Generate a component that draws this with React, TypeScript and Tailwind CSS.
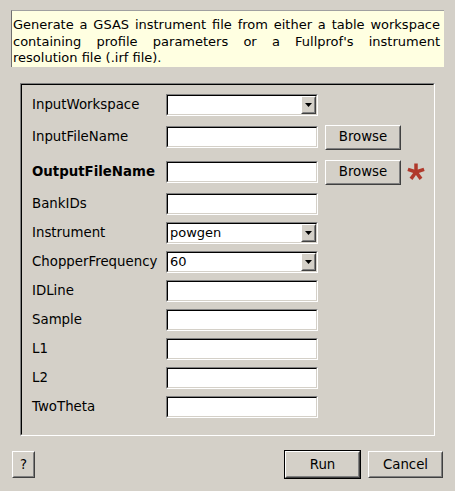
import React from "react";

const font = { fontFamily: '"DejaVu Sans", sans-serif' };

function Field({ children }: { children?: React.ReactNode }) {
  return (
    <div className="w-[152px] h-[22px] border border-t-[#808080] border-l-[#808080] border-b-white border-r-white">
      <div className="h-full border border-t-black border-l-black border-b-[#d4d0c8] border-r-[#d4d0c8] bg-white flex items-center">
        {children}
      </div>
    </div>
  );
}

function Combo({ value }: { value?: string }) {
  return (
    <Field>
      <span className="flex-1 pl-[2px] text-[13px] leading-none text-black">{value}</span>
      <div className="w-[15px] h-full border border-t-white border-l-white border-b-[#404040] border-r-[#404040] bg-[#d4d0c8]">
        <div className="h-full border border-t-[#d4d0c8] border-l-[#d4d0c8] border-b-[#808080] border-r-[#808080] flex items-center justify-center">
          <svg width="7" height="4" viewBox="0 0 7 4">
            <polygon points="0,0 7,0 3.5,4" fill="black" />
          </svg>
        </div>
      </div>
    </Field>
  );
}

function Button({
  children,
  w,
  h,
  def,
}: {
  children: React.ReactNode;
  w: string;
  h: string;
  def?: boolean;
}) {
  const inner = (
    <div className={`${w} ${h} border border-t-white border-l-white border-b-[#404040] border-r-[#404040] bg-[#d4d0c8]`}>
      <div className="h-full border border-t-[#d4d0c8] border-l-[#d4d0c8] border-b-[#808080] border-r-[#808080] flex items-center justify-center text-[13.33px] text-black">
        {children}
      </div>
    </div>
  );
  if (def) return <div className="border border-black">{inner}</div>;
  return inner;
}

function Star() {
  const arms = [-90, -18, 54, 126, 198];
  return (
    <svg width="18" height="18" viewBox="-9 -9 18 18" className="ml-[6px]">
      {arms.map((a) => {
        const r = (a * Math.PI) / 180;
        return (
          <line
            key={a}
            x1={0}
            y1={0}
            x2={Math.cos(r) * 8.5}
            y2={Math.sin(r) * 8.5}
            stroke="#b0392b"
            strokeWidth={3.5}
            strokeLinecap="butt"
          />
        );
      })}
    </svg>
  );
}

type Row = {
  label: string;
  bold?: boolean;
  h: string;
  kind: "combo" | "field";
  value?: string;
  browse?: boolean;
  star?: boolean;
};

const rows: Row[] = [
  { label: "InputWorkspace", h: "h-[30px]", kind: "combo" },
  { label: "InputFileName", h: "h-[34px]", kind: "field", browse: true },
  { label: "OutputFileName", bold: true, h: "h-[36px]", kind: "field", browse: true, star: true },
  { label: "BankIDs", h: "h-[28px]", kind: "field" },
  { label: "Instrument", h: "h-[29px]", kind: "combo", value: "powgen" },
  { label: "ChopperFrequency", h: "h-[29px]", kind: "combo", value: "60" },
  { label: "IDLine", h: "h-[29px]", kind: "field" },
  { label: "Sample", h: "h-[29px]", kind: "field" },
  { label: "L1", h: "h-[29px]", kind: "field" },
  { label: "L2", h: "h-[29px]", kind: "field" },
  { label: "TwoTheta", h: "h-[29px]", kind: "field" },
];

export default function App() {
  return (
    <div className="w-[455px] h-[491px] bg-[#d4d0c8] flex flex-col text-black" style={font}>
      <div className="mt-[10px] ml-[11px] w-[433px] h-[57px] bg-[#ffffe1] border-t border-l border-t-[#a0a0a0] border-l-[#707070] pl-[1px] pr-[4px] pt-[6px] text-[13px] leading-[16.5px] text-justify">
        Generate a GSAS instrument file from either a table workspace containing profile parameters or a
        Fullprof's instrument resolution file (.irf file).
      </div>

      <div className="mt-[16px] ml-[20px] w-[415px] h-[353px] border border-t-[#808080] border-l-[#808080] border-b-white border-r-white">
        <div className="h-full border border-t-black border-l-black border-b-[#d4d0c8] border-r-[#d4d0c8] pt-[5px] pl-[10px] flex flex-col">
          {rows.map((r) => (
            <div key={r.label} className={`${r.h} flex items-center`}>
              <div className={`w-[134px] text-[13.33px] ${r.bold ? "font-bold" : ""}`}>{r.label}</div>
              {r.kind === "combo" ? <Combo value={r.value} /> : <Field />}
              {r.browse && (
                <div className="ml-[7px]">
                  <Button w="w-[76px]" h="h-[25px]">Browse</Button>
                </div>
              )}
              {r.star && <Star />}
            </div>
          ))}
        </div>
      </div>

      <div className="mt-[14px] flex items-center px-[12px]">
        <Button w="w-[23px]" h="h-[27px]">?</Button>
        <div className="flex-1" />
        <Button w="w-[75px]" h="h-[27px]" def>Run</Button>
        <div className="ml-[7px]">
          <Button w="w-[75px]" h="h-[27px]">Cancel</Button>
        </div>
      </div>
    </div>
  );
}
